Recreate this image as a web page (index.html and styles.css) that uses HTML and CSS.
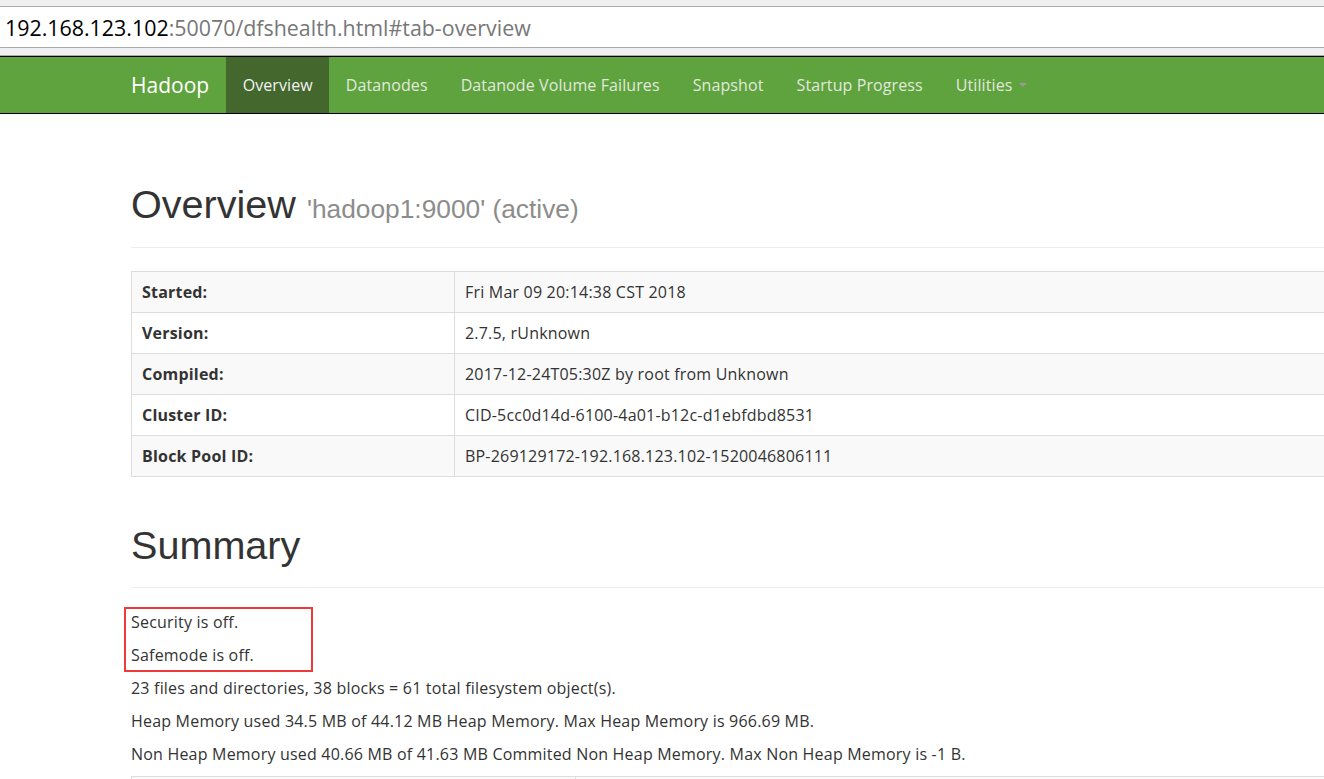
FILE: index.html
```html
<!DOCTYPE html>
<html>
<head>
<meta charset="utf-8">
<title>Namenode information</title>
<link rel="stylesheet" href="styles.css">
</head>
<body>
<div class="browser-bar">
  <div class="addr"><span class="host">192.168.123.102</span><span class="path">:50070/dfshealth.html#tab-overview</span></div>
</div>
<nav class="navbar">
  <div class="nav-inner">
    <a class="brand" href="#">Hadoop</a>
    <ul class="nav">
      <li class="active"><a href="#">Overview</a></li>
      <li><a href="#">Datanodes</a></li>
      <li><a href="#">Datanode Volume Failures</a></li>
      <li><a href="#">Snapshot</a></li>
      <li><a href="#">Startup Progress</a></li>
      <li><a href="#">Utilities <span class="caret"></span></a></li>
    </ul>
  </div>
</nav>
<div class="container">
  <div class="page-header first">
    <h1>Overview <small>'hadoop1:9000' (active)</small></h1>
  </div>
  <table class="info">
    <tr><th>Started:</th><td>Fri Mar 09 20:14:38 CST 2018</td></tr>
    <tr><th>Version:</th><td>2.7.5, rUnknown</td></tr>
    <tr><th>Compiled:</th><td>2017-12-24T05:30Z by root from Unknown</td></tr>
    <tr><th>Cluster ID:</th><td>CID-5cc0d14d-6100-4a01-b12c-d1ebfdbd8531</td></tr>
    <tr><th>Block Pool ID:</th><td>BP-269129172-192.168.123.102-1520046806111</td></tr>
  </table>
  <div class="page-header second">
    <h1>Summary</h1>
  </div>
  <div class="summary">
    <div class="highlight"></div>
    <p>Security is off.</p>
    <p>Safemode is off.</p>
    <p>23 files and directories, 38 blocks = 61 total filesystem object(s).</p>
    <p>Heap Memory used 34.5 MB of 44.12 MB Heap Memory. Max Heap Memory is 966.69 MB.</p>
    <p>Non Heap Memory used 40.66 MB of 41.63 MB Commited Non Heap Memory. Max Non Heap Memory is -1 B.</p>
  </div>
  <table class="info next">
    <tr><th>Configured Capacity:</th><td>0 B</td></tr>
  </table>
</div>
</body>
</html>
```
FILE: styles.css
```css
html, body {
  margin: 0;
  padding: 0;
  background: #fff;
  overflow: hidden;
}
body {
  width: 1324px;
  height: 779px;
  font-family: "Open Sans", "Noto Sans", sans-serif;
  font-size: 16px;
  letter-spacing: 0.2px;
  color: #333;
}
.browser-bar {
  background: #f0f0f0;
  padding-top: 6px;
  height: 56px;
  box-sizing: border-box;
  border-bottom: 1px solid #aaa;
}
.addr {
  background: #fff;
  border-top: 1px solid #aaa;
  border-bottom: 1px solid #aaa;
  height: 40px;
  display: flex;
  align-items: center;
  padding-left: 5px;
  font-size: 21.4px;
  letter-spacing: 0;
  font-family: "Open Sans", "Noto Sans", sans-serif;
}
.addr .host { color: #000; }
.addr .path { color: #777; }

.navbar {
  background: #5fa33e;
  border-top: 1px solid #000;
  border-bottom: 1px solid #000;
  height: 56px;
}
.nav-inner {
  display: flex;
  align-items: stretch;
  height: 100%;
  padding-left: 131px;
}
.brand {
  color: #fff;
  font-size: 21px;
  letter-spacing: 0;
  text-decoration: none;
  display: flex;
  align-items: center;
  padding-right: 17px;
}
.nav {
  display: flex;
  list-style: none;
  margin: 0;
  padding: 0;
  letter-spacing: 0.1px;
}
.nav li {
  display: flex;
}
.nav a {
  display: flex;
  align-items: center;
  padding: 0 16.5px;
  color: #e2e8df;
  text-decoration: none;
}
.nav li.active a {
  background: #44672e;
  color: #f2f2f2;
}
.caret {
  display: inline-block;
  width: 0;
  height: 0;
  margin-left: 6px;
  border-top: 4px solid #999;
  border-left: 4px solid transparent;
  border-right: 4px solid transparent;
  vertical-align: middle;
}

.container {
  margin-left: 131px;
  width: 1254px;
}
.page-header {
  border-bottom: 1px solid #eee;
  padding-bottom: 20px;
  margin-bottom: 23px;
}
.page-header.first {
  margin-top: 69px;
}
.page-header.second {
  margin-top: 47px;
  margin-bottom: 23px;
}
h1 {
  margin: 0;
  font-family: "Liberation Sans", Arial, sans-serif;
  font-weight: 400;
  font-size: 39.6px;
  letter-spacing: 0;
  line-height: 1.1;
  color: #333;
}
h1 small {
  font-size: 26.3px;
  color: #8c8c8c;
}
table.info {
  width: 100%;
  border-collapse: collapse;
  margin-bottom: 22px;
}
table.info th, table.info td {
  border: 1px solid #ddd;
  padding: 9px 10px;
  line-height: 22px;
  text-align: left;
  vertical-align: top;
}
table.info th {
  width: 302px;
  font-weight: 700;
}
table.info tr:nth-child(odd) th, table.info tr:nth-child(odd) td {
  background: #f9f9f9;
}
table.info.next th {
  width: 423px;
}
.summary {
  position: relative;
}
.summary p {
  margin: 0 0 11px;
  line-height: 22px;
}
.highlight {
  position: absolute;
  left: -7px;
  top: -4px;
  width: 185px;
  height: 61px;
  border: 2px solid #ef3a3a;
}
```
